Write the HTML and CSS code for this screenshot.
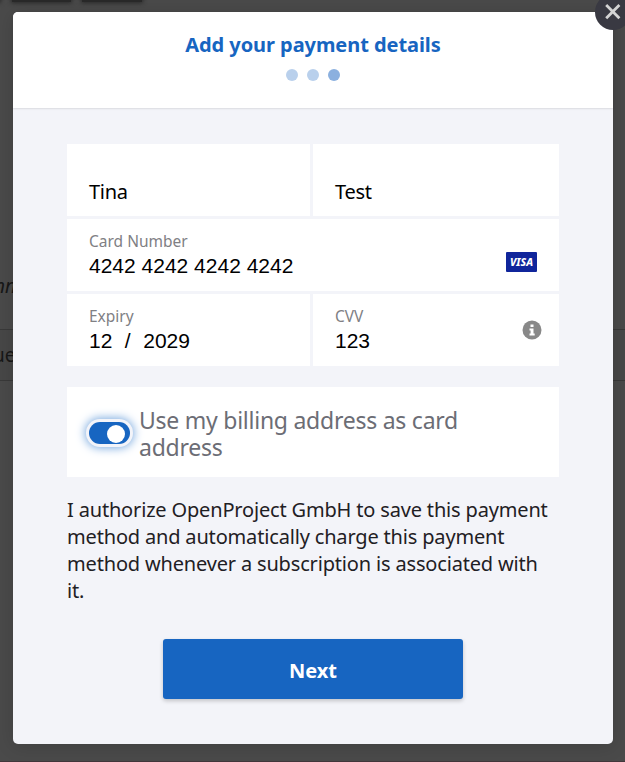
FILE: index.html
```html
<!DOCTYPE html>
<html lang="en">
<head>
<meta charset="utf-8">
<title>Add your payment details</title>
<link rel="stylesheet" href="styles.css">
</head>
<body>
<div class="backdrop" aria-hidden="true">
  <span class="tab tab-edge"></span><span class="tab tab-one"></span><span class="tab tab-two"></span>
  <span class="under under-top">nn</span>
  <div class="under-row"><span class="under under-bottom">ue</span></div>
</div>
<main class="modal">
  <button class="close" aria-label="Close"><svg viewBox="0 0 36 36"><path d="M11.2 11 24.4 24.2M24.4 11 11.2 24.2"/></svg></button>
  <header class="header">
    <h1 class="title">Add your payment details</h1>
    <div class="steps"><i></i><i></i><i class="current"></i></div>
  </header>
  <section class="content">
    <div class="fields">
      <div class="field"><span class="value name">Tina</span></div>
      <div class="field"><span class="value name">Test</span></div>
      <div class="field wide">
        <span class="label">Card Number</span><span class="value">4242 4242 4242 4242</span>
        <span class="visa">VISA</span>
      </div>
      <div class="field"><span class="label">Expiry</span><span class="value expiry"><span>12</span><span>/</span><span>2029</span></span></div>
      <div class="field"><span class="label">CVV</span><span class="value">123</span>
        <svg class="info" viewBox="0 0 20 20"><circle cx="10" cy="10" r="9.5"/><path d="M8.5 4.4h3v2.7h-3zM7.5 8.4h4v5.2h1.2v2H7.5v-2h1.1v-3.2H7.5z"/></svg>
      </div>
    </div>
    <label class="address">
      <span class="toggle"><span class="knob"></span></span>
      <span class="address-text">Use my billing address as card<br>address</span>
    </label>
    <p class="consent">I authorize OpenProject GmbH to save this payment<br>method and automatically charge this payment<br>method whenever a subscription is associated with<br>it.</p>
    <button class="next">Next</button>
  </section>
</main>
</body>
</html>
```
FILE: styles.css
```css
* { box-sizing: border-box; }
body { margin: 0; width: 625px; height: 762px; overflow: hidden; background: #4a4a4a; font-family: "Noto Sans", "Open Sans", sans-serif; padding: 12px 12px 18px 13px; }
button { border: 0; padding: 0; font-family: inherit; }
.backdrop { position: absolute; inset: 0; overflow: hidden; border-bottom: 1px solid #42373b; }
.tab { position: absolute; top: -8px; height: 10px; background: #292929; box-shadow: 0 0 4px 1px #292929; }
.tab-edge { left: -10px; width: 10px; }
.tab-one { left: 12px; width: 59px; }
.tab-two { left: 82px; width: 60px; }
.under { position: absolute; font-size: 19px; line-height: 24px; color: #171717; }
.under-top { left: -6px; top: 274px; font-style: italic; }
.under-row { position: absolute; left: 0; right: 0; top: 329px; height: 52px; border-top: 1px solid #393939; border-bottom: 1px solid #393939; background: #474747; }
.under-bottom { left: -7px; top: 13px; }
.modal { position: relative; width: 600px; height: 732px; background: #f3f4f9; border-radius: 5px; box-shadow: 0 2px 18px rgba(0,0,0,.15); }
.close { position: absolute; left: 582px; top: -18px; width: 36px; height: 36px; border-radius: 50%; background: #393942; }
.close svg { display: block; width: 36px; height: 36px; fill: none; stroke: #d4d4d4; stroke-width: 2.8; }
.header { height: 96px; background: #fff; border-radius: 5px 5px 0 0; box-shadow: 0 1px 2px rgba(0,0,0,.1); padding-top: 19px; text-align: center; }
.title { margin: 0; font-size: 20px; line-height: 28px; font-weight: 700; letter-spacing: -.06px; color: #1765c1; white-space: nowrap; }
.steps { display: flex; justify-content: center; gap: 9px; margin-top: 10px; }
.steps i { width: 12px; height: 12px; border-radius: 50%; background: #b9d0ec; }
.steps .current { background: #8bb0df; }
.content { padding: 36px 54px 0; }
.fields { display: grid; grid-template-columns: 243px 246px; grid-auto-rows: 72px; gap: 3px; }
.field { position: relative; background: #fff; padding: 11px 22px; display: flex; flex-direction: column; align-items: flex-start; white-space: nowrap; }
.wide { grid-column: span 2; }
.label { font-size: 15.5px; line-height: 22px; color: #808084; }
.value { font-family: "Liberation Sans", Arial, sans-serif; font-size: 21px; line-height: 28px; color: #000; }
.name { font-family: "Noto Sans", sans-serif; font-size: 20px; letter-spacing: -.3px; margin-top: 23px; }
.expiry { display: flex; gap: 12.5px; }
.visa { position: absolute; right: 22px; top: 33px; width: 31px; height: 20px; border-radius: 1px; background: #10259b; color: #fff; font-size: 10.5px; line-height: 20px; font-weight: 800; font-style: italic; text-align: center; }
.info { position: absolute; left: 209px; top: 26px; width: 20px; height: 20px; fill: #888; }
.info path { fill: #fff; }
.address { display: flex; align-items: center; height: 90px; margin-top: 21px; padding-left: 22px; background: #fff; color: #6c6d75; }
.toggle { width: 41px; height: 22px; margin-top: 2px; border-radius: 11px; background: #1765c1; box-shadow: 0 0 0 3px #f3f4f9, 0 0 10px 4px #79a9df; display: flex; justify-content: flex-end; align-items: center; padding: 2px 5px 0 0; flex: none; }
.knob { width: 18px; height: 18px; border-radius: 50%; background: #fff; }
.address-text { margin: 3px 0 0 9px; font-size: 23px; line-height: 27px; letter-spacing: -.25px; white-space: nowrap; }
.consent { margin: 19px 0 0; font-size: 20px; line-height: 27px; letter-spacing: -.17px; color: #1f2024; white-space: nowrap; }
.next { display: block; width: 300px; height: 60px; margin: 35px 0 0 96px; padding-top: 3px; border-radius: 3px; background: #1765c1; color: #fff; font-size: 20px; line-height: 57px; font-weight: 700; box-shadow: 0 2px 4px rgba(0,0,0,.2); }
```
